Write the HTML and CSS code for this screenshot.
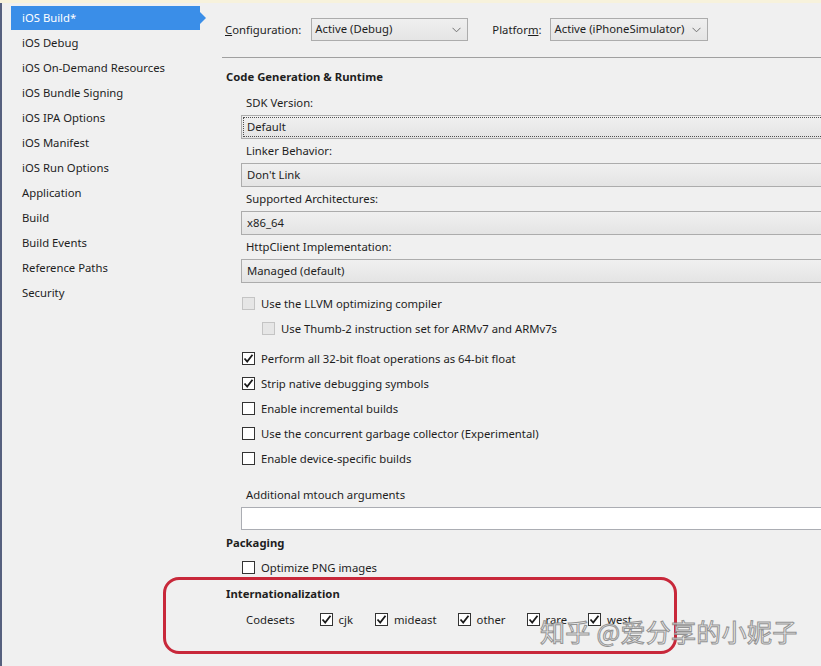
FILE: index.html
```html
<!DOCTYPE html>
<html>
<head>
<meta charset="utf-8">
<link rel="stylesheet" href="styles.css">
</head>
<body>
<div class="topstrip"></div>
<div class="layout">
  <nav class="nav">
    <div class="nav-item selected">iOS Build*</div>
    <div class="nav-item">iOS Debug</div>
    <div class="nav-item">iOS On-Demand Resources</div>
    <div class="nav-item">iOS Bundle Signing</div>
    <div class="nav-item">iOS IPA Options</div>
    <div class="nav-item">iOS Manifest</div>
    <div class="nav-item">iOS Run Options</div>
    <div class="nav-item">Application</div>
    <div class="nav-item">Build</div>
    <div class="nav-item">Build Events</div>
    <div class="nav-item">Reference Paths</div>
    <div class="nav-item">Security</div>
  </nav>
  <main class="main">
    <div class="config-row">
      <span class="config-label"><u>C</u>onfiguration:</span>
      <div class="combo combo-config">Active (Debug)<svg class="chev" width="9" height="6" viewBox="0 0 9 6"><path d="M0.5 0.8 L4.5 4.8 L8.5 0.8" fill="none" stroke="#707070" stroke-width="1"/></svg></div>
      <span class="config-label platform-label">Platfor<u>m</u>:</span>
      <div class="combo combo-platform">Active (iPhoneSimulator)<svg class="chev" width="9" height="6" viewBox="0 0 9 6"><path d="M0.5 0.8 L4.5 4.8 L8.5 0.8" fill="none" stroke="#707070" stroke-width="1"/></svg></div>
    </div>
    <div class="separator"></div>

    <div class="section-title first">Code Generation &amp; Runtime</div>
    <div class="field">
      <div class="field-label">SDK Version:</div>
      <div class="dropdown focused">Default</div>
    </div>
    <div class="field">
      <div class="field-label">Linker Behavior:</div>
      <div class="dropdown">Don't Link</div>
    </div>
    <div class="field">
      <div class="field-label">Supported Architectures:</div>
      <div class="dropdown">x86_64</div>
    </div>
    <div class="field">
      <div class="field-label">HttpClient Implementation:</div>
      <div class="dropdown">Managed (default)</div>
    </div>

    <div class="checks">
      <div class="check-row disabled"><span class="cb"></span><span>Use the LLVM optimizing compiler</span></div>
      <div class="check-row disabled indent"><span class="cb"></span><span>Use Thumb-2 instruction set for ARMv7 and ARMv7s</span></div>
      <div class="check-row spaced"><span class="cb checked"><svg width="11" height="11" viewBox="0 0 11 11"><path d="M1.5 5.5 L4.2 8.5 L9.5 1.8" fill="none" stroke="#1a1a1a" stroke-width="1.8"/></svg></span><span>Perform all 32-bit float operations as 64-bit float</span></div>
      <div class="check-row"><span class="cb checked"><svg width="11" height="11" viewBox="0 0 11 11"><path d="M1.5 5.5 L4.2 8.5 L9.5 1.8" fill="none" stroke="#1a1a1a" stroke-width="1.8"/></svg></span><span>Strip native debugging symbols</span></div>
      <div class="check-row"><span class="cb"></span><span>Enable incremental builds</span></div>
      <div class="check-row"><span class="cb"></span><span>Use the concurrent garbage collector (Experimental)</span></div>
      <div class="check-row"><span class="cb"></span><span>Enable device-specific builds</span></div>
    </div>

    <div class="field args">
      <div class="field-label">Additional mtouch arguments</div>
      <div class="textbox"></div>
    </div>

    <div class="section-title packaging">Packaging</div>
    <div class="check-row"><span class="cb"></span><span>Optimize PNG images</span></div>

    <div class="section-title intl">Internationalization</div>
    <div class="codesets">
      <span class="codesets-label">Codesets</span>
      <div class="cs-item"><span class="cb checked"><svg width="11" height="11" viewBox="0 0 11 11"><path d="M1.5 5.5 L4.2 8.5 L9.5 1.8" fill="none" stroke="#1a1a1a" stroke-width="1.8"/></svg></span><span>cjk</span></div>
      <div class="cs-item"><span class="cb checked"><svg width="11" height="11" viewBox="0 0 11 11"><path d="M1.5 5.5 L4.2 8.5 L9.5 1.8" fill="none" stroke="#1a1a1a" stroke-width="1.8"/></svg></span><span>mideast</span></div>
      <div class="cs-item"><span class="cb checked"><svg width="11" height="11" viewBox="0 0 11 11"><path d="M1.5 5.5 L4.2 8.5 L9.5 1.8" fill="none" stroke="#1a1a1a" stroke-width="1.8"/></svg></span><span>other</span></div>
      <div class="cs-item"><span class="cb checked"><svg width="11" height="11" viewBox="0 0 11 11"><path d="M1.5 5.5 L4.2 8.5 L9.5 1.8" fill="none" stroke="#1a1a1a" stroke-width="1.8"/></svg></span><span>rare</span></div>
      <div class="cs-item"><span class="cb checked"><svg width="11" height="11" viewBox="0 0 11 11"><path d="M1.5 5.5 L4.2 8.5 L9.5 1.8" fill="none" stroke="#1a1a1a" stroke-width="1.8"/></svg></span><span>west</span></div>
    </div>
  </main>
</div>
<div class="annotation"></div>
<div class="watermark">知乎 @爱分享的小妮子</div>
</body>
</html>
```

FILE: styles.css
```css
html, body {
  margin: 0;
  padding: 0;
  width: 821px;
  height: 666px;
  overflow: hidden;
  background: #f0f0f0;
  font-family: "Noto Sans", "Open Sans", "Liberation Sans", sans-serif;
  font-size: 11.3px;
  color: #1e1e1e;
  position: relative;
}

.topstrip {
  height: 3px;
  background: #f7f2dc;
}

.layout {
  display: grid;
  grid-template-columns: 220px 1fr;
  height: 663px;
  border-left: 2px solid #56607e;
  box-sizing: border-box;
}

.nav {
  padding-top: 3px;
  padding-left: 9px;
}

.nav-item {
  height: 25px;
  line-height: 24px;
  padding-left: 11px;
  white-space: nowrap;
}

.nav-item.selected {
  position: relative;
  width: 178px;
  height: 24px;
  line-height: 24px;
  margin-bottom: 1px;
  background: #3a8ee8;
  color: #ffffff;
}

.nav-item.selected::after {
  content: "";
  position: absolute;
  right: -6px;
  top: 6px;
  border-top: 6px solid transparent;
  border-bottom: 6px solid transparent;
  border-left: 6px solid #3a8ee8;
}

.main {
  overflow: hidden;
  padding-top: 15px;
}

.config-row {
  display: flex;
  align-items: center;
  height: 23px;
  padding-left: 3px;
}

.config-label {
  margin-right: 10px;
}

.platform-label {
  margin-left: 24px;
  margin-right: 9px;
}

.combo {
  box-sizing: border-box;
  height: 23px;
  line-height: 20px;
  border: 1px solid #acacac;
  background: linear-gradient(#efefef, #e5e5e5);
  padding-left: 3px;
  position: relative;
  white-space: nowrap;
}

.combo-config { width: 157px; }
.combo-platform { width: 158px; }

.chev {
  position: absolute;
  right: 6px;
  top: 8px;
}

.separator {
  height: 1px;
  background: #a0a0a0;
  margin-top: 16px;
}

.section-title {
  font-weight: bold;
  line-height: 15px;
  padding-left: 4px;
}

.section-title.first { margin-top: 11px; margin-bottom: 11px; }

.field {
  padding-left: 19px;
  margin-bottom: 4px;
}

.field-label {
  line-height: 15px;
  padding-left: 5px;
  margin-bottom: 5px;
}

.dropdown {
  box-sizing: border-box;
  width: 640px;
  height: 24px;
  line-height: 21px;
  border: 1px solid #acacac;
  background: linear-gradient(#f0f0f0, #e4e4e4);
  padding-left: 5px;
}

.dropdown.focused {
  outline: 1px dotted #505050;
  outline-offset: -3px;
}

.checks {
  margin-top: 8px;
}

.check-row {
  display: flex;
  align-items: center;
  height: 25px;
  padding-left: 20px;
  white-space: nowrap;
}

.check-row.indent { padding-left: 40px; }
.check-row.spaced { margin-top: 5px; }

.cb {
  box-sizing: border-box;
  width: 13px;
  height: 13px;
  border: 1px solid #333333;
  background: #ffffff;
  margin-right: 6px;
  display: inline-flex;
  align-items: center;
  justify-content: center;
  flex: none;
}

.check-row.disabled .cb {
  border-color: #c4c4c4;
  background: #e6e6e6;
}

.field.args {
  margin-top: 16px;
  margin-bottom: 0;
  padding-left: 19px;
}

.field.args .field-label { margin-bottom: 5px; }

.textbox {
  box-sizing: border-box;
  width: 640px;
  height: 23px;
  border: 1px solid #abadb3;
  background: #ffffff;
}

.section-title.packaging { margin-top: 5px; margin-bottom: 5px; }
.section-title.intl { margin-top: 6px; margin-bottom: 6px; }

.codesets {
  display: flex;
  align-items: center;
  height: 25px;
  padding-left: 24px;
  white-space: nowrap;
}

.codesets-label { margin-right: 25px; }

.cs-item {
  display: flex;
  align-items: center;
  margin-right: 21px;
}

.cs-item:nth-child(2) { margin-right: 22px; }

.annotation {
  position: absolute;
  left: 163px;
  top: 577px;
  width: 514px;
  height: 77px;
  box-sizing: border-box;
  border: 3px solid #c8283a;
  border-radius: 16px;
  pointer-events: none;
}

.watermark {
  position: absolute;
  left: 540px;
  top: 614px;
  font-family: "Noto Sans CJK SC", sans-serif;
  font-size: 25px;
  line-height: 34px;
  color: #f2f2f2;
  -webkit-text-stroke: 1px #8a8a8a;
  letter-spacing: 0.3px;
  white-space: nowrap;
  opacity: 0.9;
}
```
